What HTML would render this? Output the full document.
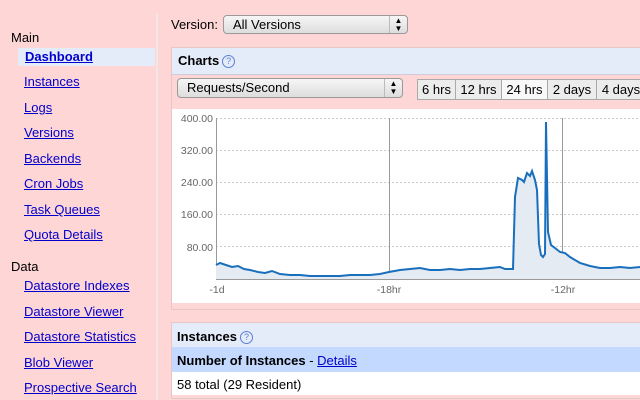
<!DOCTYPE html>
<html><head><style>
body{margin:0;width:640px;height:400px;overflow:hidden;background:#ffd6d6;font-family:"Liberation Sans",Arial,sans-serif;font-size:13px;position:relative}
.a{position:absolute;white-space:nowrap}
a,.lnk{color:#0000cc;text-decoration:underline}
.sel{position:absolute;height:19px;border:1px solid #999;border-radius:4px;background:linear-gradient(#f6f6f6,#ddd);box-sizing:border-box;font-size:13px;line-height:17px;padding-left:9px}
.sel .ar{position:absolute;right:0;top:0;bottom:0;width:17px;border-left:1px solid #bbb;text-align:center;font-size:8px;line-height:8px;padding-top:1px}
.q{display:inline-block;width:11px;height:11px;border:1px solid #5a7fd6;border-radius:50%;color:#5a7fd6;font-size:9px;line-height:11px;text-align:center;font-weight:normal;vertical-align:1px;margin-left:3px}
.tb{position:absolute;top:79px;height:21px;border:1px solid #aaa;background:#ececec;font-size:13px;line-height:20px;text-align:center;box-sizing:border-box}
</style></head><body>
<div class="a" style="left:156px;top:14px;width:2px;height:386px;background:#f4e6e6"></div>
<div class="a" style="left:11px;top:30px">Main</div>
<div class="a" style="left:18px;top:48px;width:137px;height:18px;background:#e5ecf9"></div>
<div class="a lnk" style="left:25px;top:49px;font-weight:bold">Dashboard</div>
<div class="a lnk" style="left:24px;top:74px">Instances</div>
<div class="a lnk" style="left:24px;top:100px">Logs</div>
<div class="a lnk" style="left:24px;top:125px">Versions</div>
<div class="a lnk" style="left:24px;top:151px">Backends</div>
<div class="a lnk" style="left:24px;top:176px">Cron Jobs</div>
<div class="a lnk" style="left:24px;top:202px">Task Queues</div>
<div class="a lnk" style="left:24px;top:227px">Quota Details</div>
<div class="a" style="left:11px;top:259px">Data</div>
<div class="a lnk" style="left:24px;top:278px">Datastore Indexes</div>
<div class="a lnk" style="left:24px;top:304px">Datastore Viewer</div>
<div class="a lnk" style="left:24px;top:329px">Datastore Statistics</div>
<div class="a lnk" style="left:24px;top:355px">Blob Viewer</div>
<div class="a lnk" style="left:24px;top:380px">Prospective Search</div>

<div class="a" style="left:171px;top:17px">Version:</div>
<div class="sel" style="left:223px;top:15px;width:185px">All Versions<div class="ar">▲<br>▼</div></div>

<div class="a" style="left:171px;top:47px;width:480px;height:261px;background:#ffd6d6;border:1px solid #e8c6c6"></div>
<div class="a" style="left:172px;top:48px;width:470px;height:26px;background:#e5ecf9;border-bottom:1px solid #ccd"></div>
<div class="a" style="left:178px;top:53px;font-weight:bold">Charts<span class="q">?</span></div>
<div class="sel" style="left:177px;top:78px;width:226px;height:20px">Requests/Second<div class="ar">▲<br>▼</div></div>
<div class="tb" style="left:417px;width:39px">6 hrs</div>
<div class="tb" style="left:455px;width:47px">12 hrs</div>
<div class="tb" style="left:501px;width:47px;background:#f8f8f8">24 hrs</div>
<div class="tb" style="left:547px;width:50px">2 days</div>
<div class="tb" style="left:596px;width:50px">4 days</div>
<div class="a" style="left:172px;top:109px;width:470px;height:194px;background:#fff"></div>
<svg class="a" style="left:0;top:0" width="640" height="400">
<g stroke="#ccc" stroke-dasharray="2,2" stroke-width="1">
<line x1="216" x2="640" y1="118.5" y2="118.5"/><line x1="216" x2="640" y1="150.5" y2="150.5"/><line x1="216" x2="640" y1="182.5" y2="182.5"/><line x1="216" x2="640" y1="214.5" y2="214.5"/><line x1="216" x2="640" y1="246.5" y2="246.5"/></g>
<g stroke="#999"><line x1="216.5" x2="216.5" y1="118" y2="279"/><line x1="389.5" x2="389.5" y1="118" y2="279"/><line x1="562.5" x2="562.5" y1="118" y2="279"/><line x1="216" x2="640" y1="279.5" y2="279.5"/></g>
<g font-size="10.5" fill="#666" font-family="Liberation Sans,sans-serif" text-anchor="end">
<text x="213" y="122">400.00</text><text x="213" y="154">320.00</text><text x="213" y="186">240.00</text><text x="213" y="218">160.00</text><text x="213" y="251">80.00</text></g>
<g font-size="10.5" fill="#666" font-family="Liberation Sans,sans-serif" text-anchor="middle">
<text x="217" y="293">-1d</text><text x="389" y="293">-18hr</text><text x="563" y="293">-12hr</text></g>
<path d="M216,279 L216,265 L220,263 L226,265 L232,267 L238,266 L244,269 L250,270 L258,272 L265,273 L272,271 L280,274 L290,275 L300,275 L310,276 L320,276 L330,276 L340,276 L350,275 L360,275 L370,275 L380,274 L389,272 L400,270 L410,269 L420,268 L430,270 L440,270 L450,269 L460,270 L470,269 L480,269 L490,268 L500,267 L505,269 L513,269 L515,197 L518,178 L522,180 L524,182 L527,173 L530,176 L532,171 L535,180 L537,190 L539,244 L541,255 L543,257 L545,254 L546,122 L548,232 L551,245 L555,248 L560,252 L565,253 L570,257 L580,263 L590,266 L600,268 L610,268 L620,267 L630,268 L640,267 L640,279 Z" fill="#e4ebf3" stroke="none"/>
<path d="M216,265 L220,263 L226,265 L232,267 L238,266 L244,269 L250,270 L258,272 L265,273 L272,271 L280,274 L290,275 L300,275 L310,276 L320,276 L330,276 L340,276 L350,275 L360,275 L370,275 L380,274 L389,272 L400,270 L410,269 L420,268 L430,270 L440,270 L450,269 L460,270 L470,269 L480,269 L490,268 L500,267 L505,269 L513,269 L515,197 L518,178 L522,180 L524,182 L527,173 L530,176 L532,171 L535,180 L537,190 L539,244 L541,255 L543,257 L545,254 L546,122 L548,232 L551,245 L555,248 L560,252 L565,253 L570,257 L580,263 L590,266 L600,268 L610,268 L620,267 L630,268 L640,267" fill="none" stroke="#1a6fbd" stroke-width="2"/>
</svg>

<div class="a" style="left:171px;top:322px;width:480px;height:75px;border:1px solid #e8c6c6"></div>
<div class="a" style="left:172px;top:323px;width:470px;height:24px;background:#e5ecf9"></div>
<div class="a" style="left:177px;top:329px;font-weight:bold">Instances<span class="q">?</span></div>
<div class="a" style="left:172px;top:347px;width:470px;height:25px;background:#c3d9ff"></div>
<div class="a" style="left:177px;top:353px"><b>Number of Instances</b> - <span class="lnk">Details</span></div>
<div class="a" style="left:172px;top:372px;width:470px;height:23px;background:#fff"></div>
<div class="a" style="left:177px;top:377px">58 total (29 Resident)</div>
</body></html>
